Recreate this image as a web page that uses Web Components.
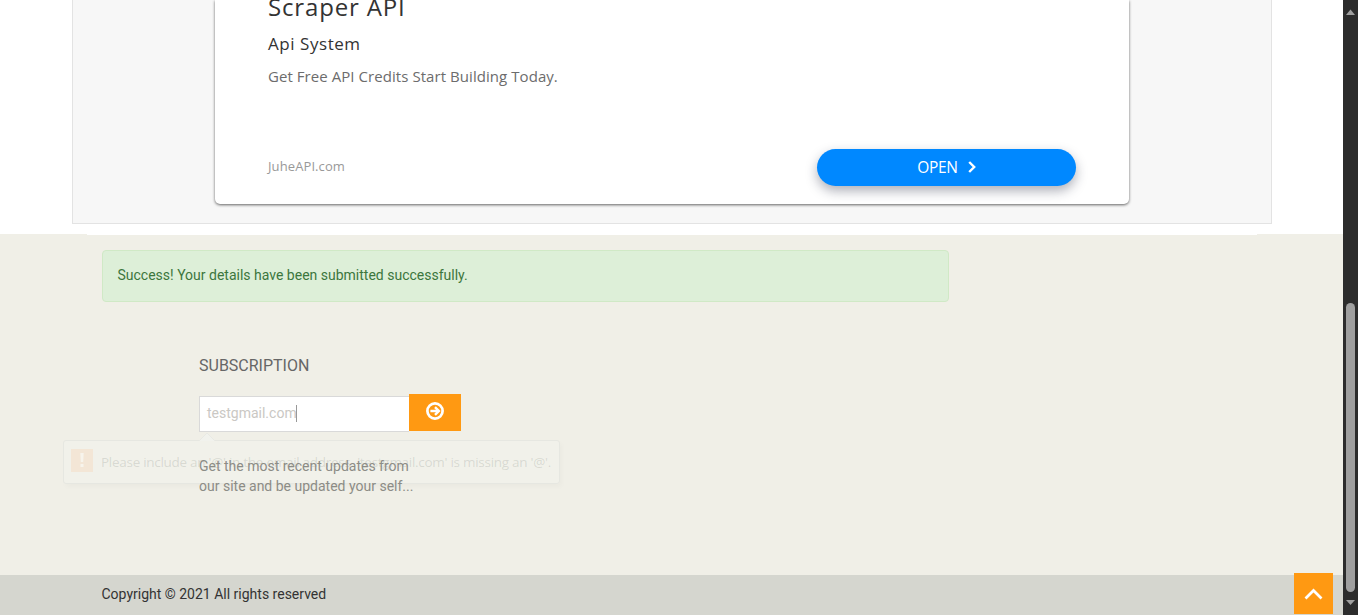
<!DOCTYPE html>
<html lang="en">
<head>
<meta charset="utf-8">
<title>Subscription</title>
<style>
html,body{margin:0;height:100%;overflow:hidden;background:#fff}
body{font-family:Roboto,"Liberation Sans",sans-serif;font-size:14px;line-height:20px}
</style>
</head>
<body>
<app-page></app-page>
<script>
const define = (name, html) => customElements.define(name, class extends HTMLElement {
  constructor() {
    super();
    const t = document.createElement('template');
    t.innerHTML = html;
    this.attachShadow({mode: 'open'}).append(t.content.cloneNode(true));
  }
});

define('open-button', `<style>
:host{display:flex;box-sizing:border-box;width:259px;height:37px;border-radius:19px;background:#0088ff;color:#fff;align-items:center;justify-content:center;gap:10px;font:15.5px/20px "Open Sans",sans-serif;letter-spacing:-.35px;box-shadow:0 5px 12px rgba(30,35,60,.36)}
span{margin-bottom:2px}
svg{display:block;margin-bottom:1px}
</style><span><slot></slot></span>
<svg width="8" height="12" viewBox="0 0 8 12" fill="none" stroke="#fff" stroke-width="2.4"><path d="M1.2 1 6.2 6 1.2 11"/></svg>`);

define('ad-card', `<style>
:host{display:flex;box-sizing:border-box;height:224px;width:1200px;margin-left:72px;border:1px solid #e3e3e3;border-top:0;background:#f7f7f7;justify-content:flex-start}
.card{box-sizing:border-box;width:914px;height:204px;margin-left:142px;padding:0 53px;background:#fff;border-radius:0 0 5px 5px;box-shadow:0 1px 3px rgba(0,0,0,.6);font-family:"Open Sans",sans-serif;display:flex;flex-direction:column}
h2,h3,p{margin:0;white-space:nowrap}
h2{font-size:24px;line-height:32px;font-weight:400;color:#333;letter-spacing:.85px;margin-top:-9px}
h3{font-size:17px;line-height:24px;font-weight:400;color:#333;letter-spacing:.55px;margin-top:9px}
p{font-size:15px;line-height:22px;color:#6c6c6c;margin-top:9px;letter-spacing:.06px}
.row{display:flex;justify-content:space-between;margin-top:62px}
.site{font-size:13px;line-height:20px;color:#999;margin-top:7px;letter-spacing:.1px}
</style><div class="card"><h2>Scraper API</h2><h3>Api System</h3><p>Get Free API Credits Start Building Today.</p>
<div class="row"><span class="site">JuheAPI.com</span><open-button>OPEN</open-button></div></div>`);

define('alert-box', `<style>
:host{display:block;box-sizing:border-box;width:847px;height:52px;margin-left:102px;padding:14px 14.5px;border:1px solid #d0e9c6;border-radius:4px;background:#ddefd8;color:#3c763d;font-size:14px;line-height:20px}
</style><slot></slot>`);

define('validation-bubble', `<style>
:host{position:absolute;left:-136px;top:46px;width:497px;height:44px;box-sizing:border-box;display:flex;align-items:center;border:1px solid #e6e7e1;border-radius:3px;background:rgba(241,243,238,.45);box-shadow:2px 3px 5px rgba(0,0,0,.025);color:rgba(110,115,110,.2);font:13.5px/20px "Open Sans",sans-serif;white-space:nowrap}
.icon{width:22px;height:23px;margin:-3px 8px 0 7px;background:#f3e6d6;flex:none}
.tip{position:absolute;left:135px;top:-9px}
svg{display:block}
span{letter-spacing:-.28px;display:inline-block}
</style><svg class="tip" width="17" height="9" viewBox="0 0 17 9"><path d="M0 9 8 1l8 8" fill="#f1f2ed" stroke="#e8e9e4"/></svg>
<svg class="icon" viewBox="0 0 22 23"><path d="M9.3 4h3.4l-.5 9H9.8zM9.5 15h3v3h-3z" fill="#f7f4ec"/></svg><span><slot></slot></span>`);

define('subscribe-form', `<style>
:host{display:block;position:relative;width:262px;margin-top:18px}
.row{display:flex;height:38px;align-items:flex-end}
.field{box-sizing:border-box;width:210px;height:36px;border:1px solid #d9d9d9;border-right:0;background:#fff;padding:6px 7px;display:flex;color:#cac8c4;font-size:14px;line-height:20px}
.caret{width:1px;height:17px;background:#999;margin:2px 0 0 -1px}
.btn{width:52px;height:37px;margin-bottom:1px;background:#ff9912;display:flex;justify-content:center}
svg{display:block;margin-top:8px}
</style><div class="row"><div class="field"><span>testgmail.com</span><i class="caret"></i></div>
<div class="btn"><svg width="18" height="18" viewBox="0 0 18 18" fill="none" stroke="#fff"><circle cx="9" cy="9" r="7.6" stroke-width="2.7"/><path d="M4.4 9h8M9 5.1 12.9 9 9 12.9" stroke-width="2.4"/></svg></div></div>
<slot></slot>`);

define('subscription-block', `<style>
:host{display:block;margin:54px 0 0 199px;width:262px}
h4{margin:0;font-size:16px;line-height:20px;font-weight:400;color:#666}
p{position:relative;z-index:1;margin:24px 0 0;color:#8c8c86;font-size:14px;line-height:20px;white-space:nowrap}
</style><h4>SUBSCRIPTION</h4>
<subscribe-form><validation-bubble>Please include an '@' in the email address. 'testgmail.com' is missing an '@'.</validation-bubble></subscribe-form>
<p>Get the most recent updates from<br>our site and be updated your self...</p>`);

define('page-footer', `<style>
:host{display:flex;flex-direction:column;height:381px;margin-top:10px;background:#f0efe7}
.line{width:1170px;height:1px;margin:0 0 15px 87px;background:#fff;flex:none}
.copy{height:40px;box-sizing:border-box;margin-top:auto;padding:9px 0 0 101.5px;background:#d5d6cf;color:#333;font-size:14px;line-height:20px}
</style><div class="line"></div>
<alert-box>Success! Your details have been submitted successfully.</alert-box>
<subscription-block></subscription-block>
<div class="copy">Copyright © 2021 All rights reserved</div>`);

define('to-top', `<style>
:host{position:absolute;right:10px;bottom:1px;width:39px;height:41px;background:#ff9912;display:flex;align-items:center;justify-content:center}
</style><svg width="19" height="12" viewBox="0 0 19 12" fill="none" stroke="#fff" stroke-width="2.7"><path d="M1.5 10.5 9.5 2.5l8 8"/></svg>`);

define('scroll-bar', `<style>
:host{display:flex;flex-direction:column;align-items:center;width:15px;height:615px;background:#2c2c2c;flex:none}
.thumb{width:9px;height:289px;border-radius:5px;background:#9f9f9f;margin-top:288px}
svg{display:block;flex:none}
</style><svg width="15" height="15"><path d="M3 15 7.5 9.5 12 15z" fill="#9f9f9f"/></svg>
<div class="thumb"></div>
<svg width="15" height="23"><path d="M3 8h9l-4.5 5z" fill="#9f9f9f"/></svg>`);

define('app-page', `<style>
:host{display:flex;width:1358px;height:615px;overflow:hidden}
main{position:relative;width:1343px;height:615px}
</style><main><ad-card></ad-card><page-footer></page-footer><to-top></to-top></main><scroll-bar></scroll-bar>`);
</script>
</body>
</html>
